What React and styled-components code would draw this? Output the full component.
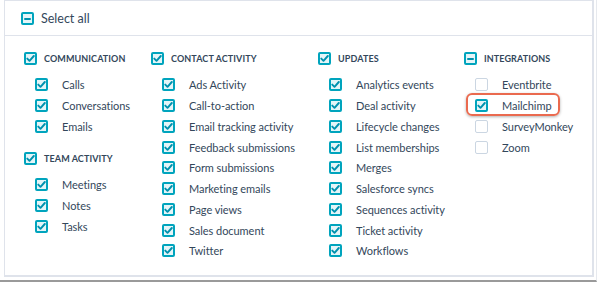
import styled, { createGlobalStyle } from "styled-components";

const GlobalStyle = createGlobalStyle`
  html, body {
    margin: 0;
    padding: 0;
    background: #ffffff;
  }
  body {
    font-family: Lato, "Open Sans", sans-serif;
    color: #33475b;
  }
`;

const groups = [
  [
    {
      title: "Communication",
      state: "on",
      items: [["Calls", true], ["Conversations", true], ["Emails", true]],
    },
    {
      title: "Team activity",
      state: "on",
      items: [["Meetings", true], ["Notes", true], ["Tasks", true]],
    },
  ],
  [
    {
      title: "Contact activity",
      state: "on",
      items: [
        ["Ads Activity", true],
        ["Call-to-action", true],
        ["Email tracking activity", true],
        ["Feedback submissions", true],
        ["Form submissions", true],
        ["Marketing emails", true],
        ["Page views", true],
        ["Sales document", true],
        ["Twitter", true],
      ],
    },
  ],
  [
    {
      title: "Updates",
      state: "on",
      items: [
        ["Analytics events", true],
        ["Deal activity", true],
        ["Lifecycle changes", true],
        ["List memberships", true],
        ["Merges", true],
        ["Salesforce syncs", true],
        ["Sequences activity", true],
        ["Ticket activity", true],
        ["Workflows", true],
      ],
    },
  ],
  [
    {
      title: "Integrations",
      state: "mixed",
      items: [
        ["Eventbrite", false],
        ["Mailchimp", true, true],
        ["SurveyMonkey", false],
        ["Zoom", false],
      ],
    },
  ],
];

const columnWidths = [127, 167, 146, null];

const Check = ({ state }) => (
  <Box $on={state !== "off"}>
    {state === "on" && (
      <svg width="9" height="9" viewBox="0 0 9 9">
        <polyline
          points="1.3,4.6 3.5,6.8 7.8,2"
          fill="none"
          stroke="#0091ae"
          strokeWidth="1.9"
          strokeLinecap="round"
          strokeLinejoin="round"
        />
      </svg>
    )}
    {state === "mixed" && <Dash />}
  </Box>
);

export default function App() {
  return (
    <>
      <GlobalStyle />
      <Frame>
        <Panel>
          <Header>
            <Check state="mixed" />
            <HeaderLabel>Select all</HeaderLabel>
          </Header>
          <Columns>
            {groups.map((col, i) => (
              <Column key={i} $width={columnWidths[i]}>
                {col.map((g) => (
                  <Group key={g.title}>
                    <GroupRow>
                      <Check state={g.state} />
                      <GroupTitle>{g.title}</GroupTitle>
                    </GroupRow>
                    <Items>
                      {g.items.map(([label, on, marked]) => (
                        <ItemRow key={label} $marked={marked}>
                          <Check state={on ? "on" : "off"} />
                          <ItemLabel>{label}</ItemLabel>
                        </ItemRow>
                      ))}
                    </Items>
                  </Group>
                ))}
              </Column>
            ))}
          </Columns>
        </Panel>
      </Frame>
    </>
  );
}

const Frame = styled.div`
  width: 597px;
  height: 282px;
  box-sizing: border-box;
  padding-left: 4px;
  border-right: 1px solid #e6e9ee;
  border-bottom: 2px solid #9a9a9a;
`;

const Panel = styled.div`
  width: 590px;
  height: 277px;
  box-sizing: border-box;
  border: 1px solid #dfe3eb;
  border-right-width: 2px;
  border-bottom-width: 2px;
  background: #ffffff;
`;

const Header = styled.div`
  height: 35px;
  box-sizing: border-box;
  display: flex;
  align-items: center;
  gap: 7px;
  padding: 1px 0 0 16px;
  border-bottom: 1px solid #dfe3eb;
`;

const HeaderLabel = styled.span`
  font-size: 12.5px;
  color: #33475b;
`;

const Columns = styled.div`
  display: flex;
  padding: 12px 0 0 19px;
`;

const Column = styled.div`
  ${({ $width }) => ($width ? `width: ${$width}px;` : "flex: 1;")}
  flex-shrink: 0;
  display: flex;
  flex-direction: column;
  gap: 11px;
`;

const Group = styled.div`
  display: flex;
  flex-direction: column;
  gap: 5.5px;
`;

const GroupRow = styled.div`
  height: 21px;
  display: flex;
  align-items: center;
  gap: 7px;
`;

const GroupTitle = styled.span`
  font-size: 9px;
  font-weight: 700;
  text-transform: uppercase;
  color: #33475b;
  letter-spacing: 0.1px;
`;

const Items = styled.div`
  display: flex;
  flex-direction: column;
  padding-left: 11px;
`;

const ItemRow = styled.div`
  position: relative;
  height: 20.75px;
  display: flex;
  align-items: center;
  gap: 14px;

  ${({ $marked }) =>
    $marked &&
    `
    &::after {
      content: "";
      position: absolute;
      left: -9px;
      top: -2px;
      width: 90px;
      height: 19px;
      border: 2.5px solid #ea6a4f;
      border-radius: 6px;
      box-shadow: 0 1px 3px rgba(0, 0, 0, 0.3);
    }
  `}
`;

const ItemLabel = styled.span`
  font-size: 11px;
  color: #33475b;
  white-space: nowrap;
  letter-spacing: -0.05px;
`;

const Box = styled.span`
  width: 13px;
  height: 13px;
  box-sizing: border-box;
  flex-shrink: 0;
  display: flex;
  align-items: center;
  justify-content: center;
  border-radius: 2px;
  border: ${({ $on }) => ($on ? "2px solid #00a4bd" : "1px solid #cbd6e2")};
  background: ${({ $on }) => ($on ? "#e5f5f8" : "#ffffff")};
`;

const Dash = styled.span`
  width: 7px;
  height: 2px;
  border-radius: 1px;
  background: #0091ae;
`;
